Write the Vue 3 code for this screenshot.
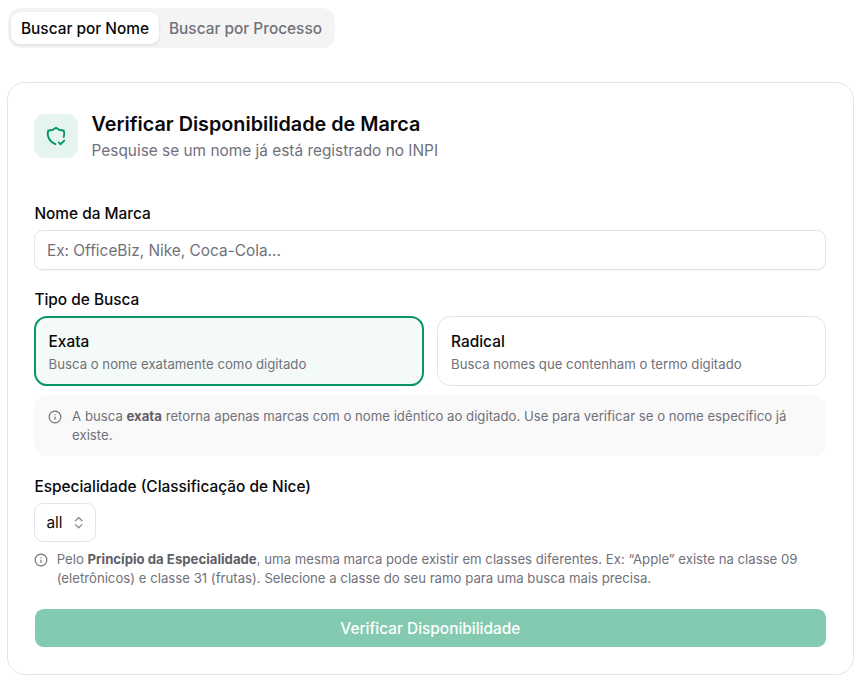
<script setup>
import { ref } from 'vue';

const activeTab = ref('nome');
const searchType = ref('exata');
const brand = ref('');
</script>

<template>
  <main class="page">
    <div class="tabs">
      <button class="tab" :class="{ active: activeTab === 'nome' }" @click="activeTab = 'nome'">Buscar por Nome</button>
      <button class="tab" :class="{ active: activeTab === 'processo' }" @click="activeTab = 'processo'">Buscar por Processo</button>
    </div>

    <section class="card">
      <header class="head">
        <div class="head-icon">
          <svg width="22" height="22" viewBox="0 0 24 24" fill="none" stroke="#079563" stroke-width="2" stroke-linecap="round" stroke-linejoin="round">
            <path d="M11.46 20.846a12 12 0 0 1-7.96-14.846a12 12 0 0 0 8.500-3a12 12 0 0 0 8.500 3a12 12 0 0 1-.09 7.060" />
            <path d="M15 19l2 2l4-4" />
          </svg>
        </div>
        <div>
          <h1>Verificar Disponibilidade de Marca</h1>
          <p class="subtitle">Pesquise se um nome já está registrado no INPI</p>
        </div>
      </header>

      <label class="label brand-label" for="brand">Nome da Marca</label>
      <input id="brand" v-model="brand" class="input" placeholder="Ex: OfficeBiz, Nike, Coca-Cola..." />

      <div class="label type-label">Tipo de Busca</div>
      <div class="types">
        <button class="type" :class="{ selected: searchType === 'exata' }" @click="searchType = 'exata'">
          <span class="type-name">Exata</span>
          <span class="type-desc">Busca o nome exatamente como digitado</span>
        </button>
        <button class="type" :class="{ selected: searchType === 'radical' }" @click="searchType = 'radical'">
          <span class="type-name">Radical</span>
          <span class="type-desc">Busca nomes que contenham o termo digitado</span>
        </button>
      </div>

      <div class="notice">
        <svg class="info" width="14" height="14" viewBox="0 0 24 24" fill="none" stroke="#71717a" stroke-width="2" stroke-linecap="round" stroke-linejoin="round">
          <circle cx="12" cy="12" r="10" />
          <path d="M12 16v-4" />
          <path d="M12 8h.01" />
        </svg>
        <p>A busca <strong>exata</strong> retorna apenas marcas com o nome idêntico ao digitado. Use para verificar se o nome específico já existe.</p>
      </div>

      <div class="label spec-label">Especialidade (Classificação de Nice)</div>
      <div class="select">
        <span>all</span>
        <svg width="15.400" height="15.400" viewBox="0 0 24 24" fill="none" stroke="#8a8a92" stroke-width="2" stroke-linecap="round" stroke-linejoin="round">
          <path d="m7 15 5 5 5-5" />
          <path d="m7 9 5-5 5 5" />
        </svg>
      </div>

      <div class="hint">
        <svg class="info" width="14" height="14" viewBox="0 0 24 24" fill="none" stroke="#71717a" stroke-width="2" stroke-linecap="round" stroke-linejoin="round">
          <circle cx="12" cy="12" r="10" />
          <path d="M12 16v-4" />
          <path d="M12 8h.01" />
        </svg>
        <p>Pelo <strong>Princípio da Especialidade</strong>, uma mesma marca pode existir em classes diferentes. Ex: “Apple” existe na classe 09 (eletrônicos) e classe 31 (frutas). Selecione a classe do seu ramo para uma busca mais precisa.</p>
      </div>

      <button class="submit" disabled>Verificar Disponibilidade</button>
    </section>
  </main>
</template>

<style>
html, body {
  background: #fff;
}
</style>

<style scoped>
* {
  box-sizing: border-box;
}

.page {
  padding: 8px 6.400px 0 7px;
  font-family: Inter, "Liberation Sans", sans-serif;
  color: #09090b;
}

button {
  font-family: inherit;
  border: none;
  background: none;
  padding: 0;
}

.tabs {
  display: inline-flex;
  margin-left: 1px;
  padding: 4px 3px;
  height: 40px;
  background: #f4f4f5;
  border-radius: 13.200px;
}

.tab {
  height: 32px;
  padding: 0 10px;
  font-size: 15.400px;
  font-weight: 500;
  color: #71717a;
  border-radius: 8.800px;
}

.tab.active {
  background: #fff;
  color: #09090b;
  box-shadow: 0 1px 3px rgba(0, 0, 0, 0.12);
}

.card {
  margin-top: 34px;
  height: 593px;
  padding: 30.800px 26.400px 0;
  border: 1px solid #e4e4e7;
  border-radius: 17.600px;
  background: #fff;
}

.head {
  display: flex;
  gap: 13.200px;
  height: 52px;
}

.head-icon {
  flex: none;
  width: 44px;
  height: 44px;
  border-radius: 11px;
  background: #e6f4ef;
  display: flex;
  align-items: center;
  justify-content: center;
}

h1 {
  margin: 0;
  font-size: 19.800px;
  line-height: 20px;
  font-weight: 600;
}

.subtitle {
  margin: 7px 0 0;
  font-size: 15.400px;
  line-height: 20px;
  color: #71717a;
}

.label {
  display: block;
  font-size: 15.400px;
  line-height: 20px;
  font-weight: 500;
}

.brand-label {
  margin-top: 38px;
}

.input {
  display: block;
  width: 100%;
  height: 40px;
  margin-top: 6px;
  padding: 1px 11.500px 0;
  font-family: inherit;
  font-size: 15.400px;
  border: 1px solid #e4e4e7;
  border-radius: 8.800px;
  outline: none;
  box-shadow: 0 1px 2px rgba(0, 0, 0, 0.04);
}

.input::placeholder {
  color: #71717a;
}

.type-label {
  margin-top: 20px;
}

.types {
  display: grid;
  grid-template-columns: 1fr 1fr;
  gap: 13.200px;
  margin-top: 6px;
}

.type {
  display: flex;
  flex-direction: column;
  align-items: flex-start;
  height: 70px;
  padding: 15px 13.200px 0;
  text-align: left;
  border: 1px solid #e4e4e7;
  border-radius: 13.200px;
}

.type.selected {
  border: 2px solid #079563;
  padding: 14px 12.200px 0;
  background: #f3faf7;
}

.type-name {
  font-size: 15.400px;
  line-height: 20px;
  font-weight: 500;
  color: #09090b;
}

.type-desc {
  margin-top: 3px;
  font-size: 13.200px;
  line-height: 18px;
  color: #71717a;
}

.notice {
  display: flex;
  gap: 10.500px;
  margin-top: 9px;
  padding: 12px 13.200px;
  background: #f9f9f9;
  border-radius: 13.200px;
}

.notice p,
.hint p {
  margin: 0;
  font-size: 13.200px;
  line-height: 18.700px;
  color: #71717a;
}

strong {
  font-weight: 700;
  color: #5f5f67;
}

.info {
  flex: none;
  margin-top: 3px;
}

.spec-label {
  margin-top: 20.500px;
}

.select {
  display: flex;
  align-items: center;
  justify-content: space-between;
  width: 62px;
  height: 39px;
  margin-top: 6.500px;
  padding: 0 9.500px 0 11px;
  font-size: 15.400px;
  border: 1px solid #e4e4e7;
  border-radius: 8.800px;
}

.hint {
  display: flex;
  gap: 8.300px;
  margin-top: 8px;
}

.submit {
  display: block;
  width: calc(100% - 1.200px);
  height: 38px;
  margin: 21.600px 0.600px 0;
  font-size: 15.400px;
  font-weight: 500;
  color: #fff;
  background: #83cab1;
  border-radius: 8.800px;
}
</style>
